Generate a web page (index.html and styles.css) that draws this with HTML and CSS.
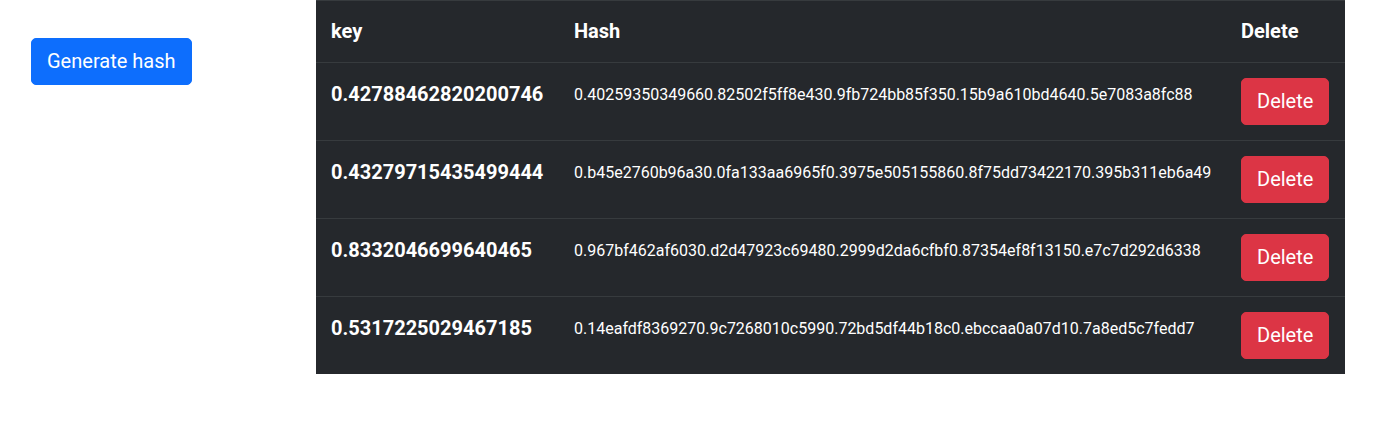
FILE: index.html
```html
<!DOCTYPE html>
<html lang="en">
<head>
<meta charset="utf-8">
<title>Hash table</title>
<link rel="stylesheet" href="styles.css">
</head>
<body>
<div class="page">
  <div class="side">
    <button class="btn btn-primary">Generate hash</button>
  </div>
  <table class="hash-table">
    <colgroup>
      <col class="col-key">
      <col class="col-hash">
      <col class="col-del">
    </colgroup>
    <thead>
      <tr><th>key</th><th class="hash-head">Hash</th><th class="del-head">Delete</th></tr>
    </thead>
    <tbody>
      <tr>
        <td class="key">0.42788462820200746</td>
        <td class="hash">0.40259350349660.82502f5ff8e430.9fb724bb85f350.15b9a610bd4640.5e7083a8fc88</td>
        <td class="del"><button class="btn btn-danger">Delete</button></td>
      </tr>
      <tr>
        <td class="key">0.43279715435499444</td>
        <td class="hash">0.b45e2760b96a30.0fa133aa6965f0.3975e505155860.8f75dd73422170.395b311eb6a49</td>
        <td class="del"><button class="btn btn-danger">Delete</button></td>
      </tr>
      <tr>
        <td class="key">0.8332046699640465</td>
        <td class="hash">0.967bf462af6030.d2d47923c69480.2999d2da6cfbf0.87354ef8f13150.e7c7d292d6338</td>
        <td class="del"><button class="btn btn-danger">Delete</button></td>
      </tr>
      <tr>
        <td class="key">0.5317225029467185</td>
        <td class="hash">0.14eafdf8369270.9c7268010c5990.72bd5df44b18c0.ebccaa0a07d10.7a8ed5c7fedd7</td>
        <td class="del"><button class="btn btn-danger">Delete</button></td>
      </tr>
    </tbody>
  </table>
</div>
</body>
</html>
```

FILE: styles.css
```css
* { box-sizing: border-box; }
html, body { margin: 0; padding: 0; background: #fff; }
body {
  font-family: Roboto, "Liberation Sans", sans-serif;
  font-size: 16px;
  line-height: 1.5;
  color: #212529;
}
.page {
  display: flex;
  align-items: flex-start;
}
.side {
  width: 316px;
  flex: none;
  padding: 38px 0 0 31px;
}
.btn {
  display: inline-block;
  font-family: inherit;
  font-size: 20px;
  line-height: 29px;
  padding: 8px 15px;
  border: 1px solid transparent;
  border-radius: 5px;
  color: #fff;
  cursor: pointer;
}
.btn-primary { background: #0d6efd; border-color: #0d6efd; }
.btn-danger { background: #dc3545; border-color: #dc3545; }
.hash-table {
  width: 1029px;
  flex: none;
  border-collapse: collapse;
  table-layout: fixed;
  background: #25282c;
  color: #fff;
  border-top: 1px solid #373b3e;
}
.col-key { width: 242px; }
.col-hash { width: 667px; }
.col-del { width: 120px; }
.hash-table th, .hash-table td {
  text-align: left;
  vertical-align: top;
  padding: 15px 16px 15px 15px;
  border-bottom: 1px solid #373b3e;
}
.hash-table th {
  padding-top: 15px;
  padding-bottom: 16px;
  font-size: 20px;
  line-height: 30px;
  font-weight: 700;
}
.hash-table th.hash-head,
.hash-table th.del-head { padding-left: 16px; }
.hash-table td.key {
  padding-top: 16px;
  font-size: 20px;
  line-height: 30px;
  font-weight: 700;
}
.hash-table td.hash {
  padding-top: 17px;
  padding-left: 16px;
  font-size: 16px;
  line-height: 30px;
}
.hash-table td.del { padding-left: 16px; }
.hash-table tbody tr:last-child td { border-bottom: none; }
```
